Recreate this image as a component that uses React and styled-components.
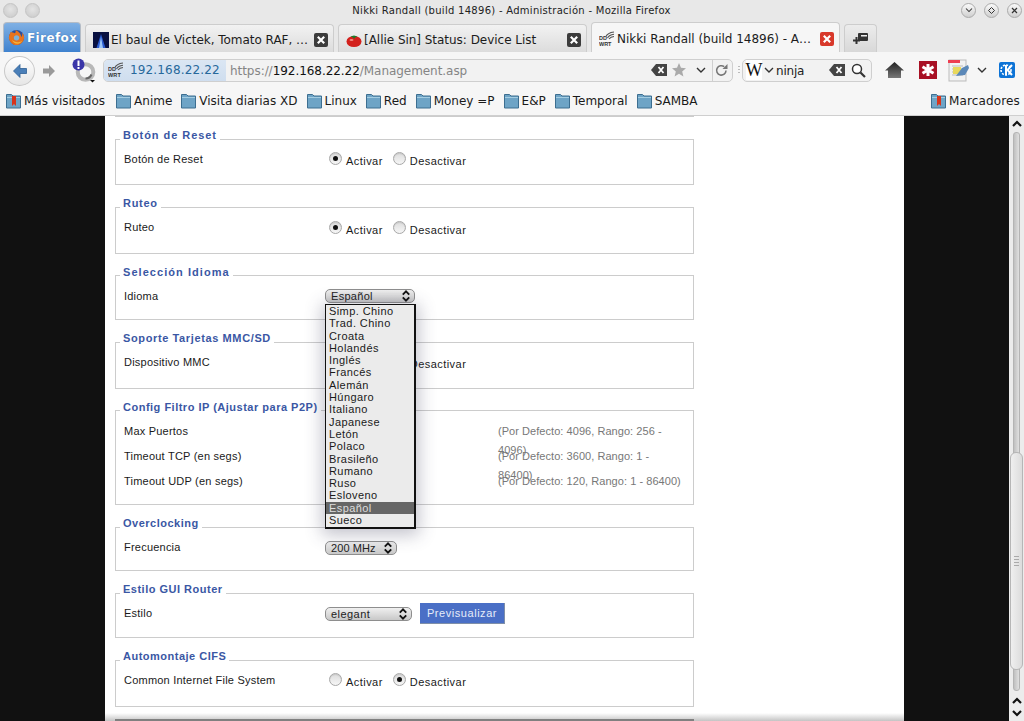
import React from "react";
import styled, { createGlobalStyle } from "styled-components";

const Global = createGlobalStyle`
  html, body { margin: 0; padding: 0; height: 100%; overflow: hidden; background: #111; }
  #root { height: 100%; }
  * { box-sizing: border-box; }
`;

const Win = styled.div`
  width: 1024px; height: 721px; display: flex; flex-direction: column; overflow: hidden;
  font-family: "DejaVu Sans", sans-serif; font-size: 12px; color: #222;
`;

/* ---- title bar ---- */
const TitleBar = styled.div`
  height: 20px; flex: none; background: #e8e8e8; display: flex; align-items: center;
  padding: 0 2px 0 3px;
`;
const TitleGroup = styled.div`display: flex; gap: ${p => p.$gap}px; width: 72px; justify-content: ${p => p.$end ? "flex-end" : "flex-start"};`;
const TitleText = styled.div`flex: 1; text-align: center; font-size: 10px; letter-spacing: .28px; color: #222; padding-right: 2px; white-space: nowrap;`;
const WinBtn = styled.div`
  width: 15px; height: 15px; border-radius: 50%; border: 1px solid ${p => p.$off ? "#c4c4c4" : "#aaa"};
  background: ${p => p.$off ? "radial-gradient(circle at 50% 40%, #e4e4e4, #c8c8c8)" : "linear-gradient(#fafafa, #cfcfcf)"};
  display: flex; align-items: center; justify-content: center; color: #333;
`;

/* ---- tabs ---- */
const TabBar = styled.div`
  height: 32px; flex: none; background: #e8e8e8; display: flex; align-items: flex-end; padding-left: 3px; gap: 4px;
`;
const FirefoxBtn = styled.div`
  width: 78px; height: 30px; border: 1px solid #b4bcc6; border-bottom: 0; border-radius: 4px 4px 0 0;
  background: linear-gradient(#7fb0e4, #3f82cf); display: flex; align-items: center; gap: 2px; padding-left: 4px;
  color: #fff; font-weight: bold; font-size: 12px; letter-spacing: .4px;
  text-shadow: 0 0 1px #2b5f9f;
`;
const Tab = styled.div`
  width: 249px; height: ${p => p.$active ? 30 : 28}px; border: 1px solid #cdcdcd; border-bottom: 0;
  border-radius: 4px 4px 0 0; display: flex; align-items: center; padding: 3px 5px 0 7px;
  background: ${p => p.$active ? "#f6f6f6" : "linear-gradient(#f2f2f2, #dcdcdc)"};
  color: #1c1c1c; font-size: 12px; letter-spacing: -.03px;
`;
const TabIcon = styled.span`width: 18px; height: 16px; flex: none; display: flex;`;
const TabLabel = styled.span`flex: 1; white-space: nowrap; overflow: hidden;`;
const NewTab = styled(Tab)`width: 33px; justify-content: center; padding: 0; background: linear-gradient(#ececec, #d8d8d8);`;
const Close = styled.span`
  width: 14px; height: 14px; flex: none; border-radius: 2px; background: ${p => p.$red ? "#d8392b" : "#3c3c3c"};
  display: flex; align-items: center; justify-content: center;
`;

/* ---- nav ---- */
const NavBar = styled.div`
  height: 36px; flex: none; background: #f6f6f6; display: flex; align-items: center; padding-left: 4px;
`;
const BackBtn = styled.div`
  width: 31px; height: 30px; flex: none; border-radius: 50%; border: 1px solid #c8c8c8; margin-top: 2px;
  background: linear-gradient(#fff, #e6e6e6); display: flex; align-items: center; justify-content: center;
`;
const FwdIcon = styled.span`width: 14px; height: 14px; margin: 2px 0 0 7px; display: flex; flex: none;`;
const AlertIcon = styled.span`width: 24px; height: 25px; margin: 0 0 0 16px; flex: none; display: flex;`;
const UrlBar = styled.div`
  width: 630px; height: 23px; margin-left: 7px; flex: none; border: 1px solid #cfcfcf; border-radius: 5px;
  background: #f2f2f2; display: flex; align-items: center; overflow: hidden;
`;
const Identity = styled.div`
  width: 122px; height: 100%; flex: none; background: linear-gradient(#dbe6f3, #cfdeef); display: flex; align-items: center;
  padding-left: 4px; gap: 6px; color: #27689b; font-size: 12px; letter-spacing: .15px;
`;
const UrlText = styled.div`flex: 1; padding-left: 4px; color: #858585; font-size: 12px; letter-spacing: -.05px; white-space: nowrap; margin-top: 1px;`;
const Host = styled.span`color: #111;`;
const UrlTools = styled.div`display: flex; align-items: center; height: 100%; padding-right: 4px;`;
const Divider = styled.span`width: 1px; height: 100%; background: #cfcfcf; margin: 0 2px 0 6px;`;
const ToolSlot = styled.span`display: flex; align-items: center; margin-left: ${p => p.$ml || 0}px;`;
const SearchGrip = styled.span`
  width: 2px; height: 9px; margin: 0 2px 0 5px; flex: none;
  background: repeating-linear-gradient(#bbb 0 1px, transparent 1px 3px);
`;
const SearchBar = styled.div`
  width: 130px; height: 23px; flex: none; border: 1px solid #cfcfcf; border-radius: 5px;
  background: #f2f2f2; display: flex; align-items: center; padding: 0 5px 0 3px;
`;
const WikiW = styled.span`
  width: 16px; height: 20px; background: #fff; font-family: "Liberation Serif", serif; font-size: 18px;
  display: flex; align-items: center; justify-content: center; color: #111;
`;
const SearchText = styled.span`flex: 1; font-size: 12px; margin-left: 2px; margin-top: 1px; letter-spacing: -.2px;`;
const NavIcons = styled.div`display: flex; align-items: center; margin-left: 13px; flex: none;`;
const NavIcon = styled.span`display: flex; margin-left: ${p => p.$ml || 0}px;`;

/* ---- bookmarks ---- */
const BookmarkBar = styled.div`
  height: 28px; flex: none; background: #f6f6f6; border-bottom: 1px solid #cfcfcf; display: flex; align-items: center;
  padding: 0 4px 1px 6px; gap: 9px;
`;
const Bookmark = styled.div`
  display: flex; align-items: center; gap: 3px; font-size: 12px; color: #1a1a1a; white-space: nowrap;
  margin-left: ${p => p.$auto ? "auto" : "0"}; margin-right: ${p => p.$mr || 0}px; letter-spacing: ${p => p.$ls || 0}px;
`;

/* ---- viewport ---- */
const Viewport = styled.div`flex: 1; display: flex; min-height: 0;`;
const PageBg = styled.div`flex: 1; background: #111; padding-left: 105px; overflow: hidden;`;
const Content = styled.div`
  position: relative; width: 799px; height: 605px; background: #fff; padding-left: 10px;
  font-family: "Liberation Sans", Arial, sans-serif; font-size: 11px; letter-spacing: .22px; color: #1a1a1a;
`;
const TopRule = styled.div`width: 579px; height: 1px; background: #ccc;`;
const Field = styled.fieldset`
  width: 579px; height: ${p => p.$h + 6}px; margin: ${p => p.$mt}px 0 0; padding: 0 0 0 8px; min-width: 0;
  border: 1px solid #ccc; display: block;
`;
const Legend = styled.legend`
  margin-left: -4px; padding: 0 3px; font-weight: bold; color: #3a57a4; font-size: 11px; line-height: 13px;
  letter-spacing: ${p => p.$ls ?? .5}px; transform: translateY(${p => p.$dy ?? -4}px);
`;
const Rows = styled.div`padding-top: ${p => p.$pt ?? 1}px;`;
const Row = styled.div`display: grid; grid-template-columns: 201px 173px 186px; height: 25px; align-items: start;`;
const Label = styled.div`line-height: 25px;`;
const Controls = styled.div`display: flex; align-items: flex-start; padding: ${p => p.$pt ?? 5}px 0 0 4px; white-space: nowrap; grid-column: 2 / 4;`;
const Radio = styled.span`
  width: 13px; height: 13px; border-radius: 50%; border: 1px solid #a8a8a8; flex: none;
  background: linear-gradient(#dcdcdc, #f6f6f6); display: flex; align-items: center; justify-content: center;
  box-shadow: inset 0 1px 1px rgba(0,0,0,.1);
  margin: ${p => p.$first ? 0 : "0 0 0 10px"};
  &::after { content: ""; width: 5px; height: 5px; border-radius: 50%; background: ${p => p.$on ? "#111" : "transparent"}; }
`;
const RadioText = styled.span`margin: 3px 0 0 4px; line-height: 13px; letter-spacing: .45px;`;
const Hint = styled.div`grid-column: 3; color: #777; line-height: 19px; padding-top: 3px; letter-spacing: .05px;`;
const SelectBox = styled.div`
  width: ${p => p.$w}px; height: 14px; margin: ${p => p.$mt ?? 6}px 0 0; border: 1px solid #8e8e8e; border-radius: 5px; flex: none;
  background: linear-gradient(#f0f0f0, #c8c8c8); display: flex; align-items: center; justify-content: space-between;
  padding: 0 3px 0 5px; color: #222; line-height: 12px; letter-spacing: ${p => p.$ls ?? .3}px;
`;
const SelectRow = styled.div`display: flex; align-items: flex-start; grid-column: 2 / 4;`;
const Btn = styled.div`
  width: 85px; height: 21px; margin: 2px 0 0 8px; background: #4a6fc6; border-right: 1px solid #7f8fa8; border-bottom: 1px solid #7f8fa8; color: #e6ecf9;
  display: flex; align-items: center; justify-content: center; letter-spacing: .55px; padding-bottom: 1px;
`;
const Popup = styled.div`
  position: absolute; left: 220px; top: 188px; width: 91px; height: 225px; background: #ebebeb; border: 1px solid #111; border-width: 1px 2px 2px 1px;
  box-shadow: 0 3px 16px 3px rgba(60,60,90,.3); z-index: 5; color: #1a1a1a;
`;
const Option = styled.div`
  height: 12.3px; line-height: 12.3px; padding-left: 3px; white-space: nowrap; letter-spacing: .42px;
  background: ${p => p.$sel ? "#666" : "transparent"}; color: ${p => p.$sel ? "#ddd" : "inherit"};
`;
const Footer = styled.div`
  position: absolute; left: 0; right: 0; bottom: 0; height: 8px; background: linear-gradient(#fff, #c4c4c4);
`;
const FooterRule = styled.div`position: absolute; left: 10px; right: 210px; bottom: 0; height: 2px; background: #808080;`;

/* ---- scrollbar ---- */
const Scrollbar = styled.div`
  width: 15px; flex: none; background: #ececec; display: flex; flex-direction: column; align-items: center; padding: 1px 0;
`;
const Arrow = styled.span`width: 10px; height: 13px; display: flex; align-items: center; flex: none;`;
const Groove = styled.div`
  position: relative; flex: 1; width: 15px; margin: 2px 0 5px; display: flex; justify-content: center;
  &::before { content: ""; width: 5px; height: 100%; border: 1px solid #b4b4b4; border-radius: 3px; background: linear-gradient(90deg, #c0c0c0, #e0e0e0); }
`;
const Thumb = styled.div`
  position: absolute; left: 1px; right: 1px; top: 320px; height: 218px; border: 1px solid #b6b6b6; border-radius: 6px;
  background: linear-gradient(90deg, #efefef, #dcdcdc); display: flex; flex-direction: column; align-items: center; justify-content: center; gap: 2px;
`;
const Grip = styled.span`width: 5px; height: 1px; background: #aaa;`;

/* ---- icons ---- */
const Chev = ({ c = "#333", s = 8 }) => (
  <svg width={s + 2} height={s} viewBox="0 0 10 8"><path d="M1 2l4 4 4-4" fill="none" stroke={c} strokeWidth="1.4" /></svg>
);
const FirefoxLogo = () => (
  <svg width="17" height="17" viewBox="0 0 18 18">
    <circle cx="9" cy="9" r="8" fill="#2b4f9a" />
    <circle cx="9.5" cy="9" r="4" fill="#7db1d8" />
    <path d="M3 3c-1 2-2 4-2 6 0 4 3.500 8 8 8s8-3.600 8-8c0-2-.8-3.800-2-5 .4 2-.2 3.500-1 4.500C14 6 12 3 8 1c.6 2-.3 3-1 3.600C6 3.800 4 3.800 3 3zm6 3.500c1.600 0 3 1.200 3 2.800s-1.400 2.900-3 2.900-3-1.100-3-2.700 1.400-3 3-3z" fill="#e8731c" />
    <path d="M4 11c1 3 3.500 4.500 6 4.500s4-1.200 5-3c-1 1-3 1.700-5 1.500S5.500 13 4 11z" fill="#f6b63a" />
  </svg>
);
const VictekIcon = () => (
  <svg width="16" height="16" viewBox="0 0 16 16">
    <rect width="16" height="16" fill="#081040" />
    <path d="M8 2L3.500 16h9z" fill="#2a5bd0" />
    <path d="M8 5L6 16h4z" fill="#9cc4f6" />
  </svg>
);
const TomatoIcon = () => (
  <svg width="16" height="16" viewBox="0 0 16 16">
    <ellipse cx="8" cy="9.500" rx="7.500" ry="5.500" fill="#d3201c" />
    <ellipse cx="5.500" cy="8" rx="2" ry="1" fill="#f08a80" />
    <path d="M4.500 4.500L8 3.500l3.500 1L9 5.500 8 7 7 5.500z" fill="#1d7a2a" />
  </svg>
);
const DdWrt = () => (
  <svg width="16" height="16" viewBox="0 0 16 16">
    <text x="0" y="9" fontFamily="Liberation Sans, sans-serif" fontSize="5.500" fontWeight="bold" fill="#333">DD</text>
    <text x="0" y="15" fontFamily="Liberation Sans, sans-serif" fontSize="5.500" fontWeight="bold" fill="#333">WRT</text>
    <path d="M7 5.500C8 3 11 1.500 15 1M8.500 7c1-2 3.500-3.300 6.500-3.700M10 8c1-1.300 3-2.300 5-2.500" fill="none" stroke="#555" strokeWidth="1.100" />
  </svg>
);
const CloseX = () => (
  <svg width="10" height="10" viewBox="0 0 10 10"><path d="M1.800 1.800l6.400 6.400M8.200 1.800L1.800 8.200" stroke="#fff" strokeWidth="2.200" /></svg>
);
const NewTabIcon = () => (
  <svg width="15" height="12" viewBox="0 0 15 12">
    <rect x="5" y="0" width="10" height="8" rx="1" fill="#333" />
    <rect x="8" y="2" width="6" height="1.500" fill="#eee" />
    <path d="M3.500 4v7M0 7.500h7" stroke="#333" strokeWidth="2" />
  </svg>
);
const BackArrow = () => (
  <svg width="16" height="16" viewBox="0 0 16 16"><path d="M8 1.500L1.500 8 8 14.500V10.500h6.500v-5H8z" fill="#4a7fb8" stroke="#2d5f95" strokeWidth=".8" /></svg>
);
const FwdArrow = () => (
  <svg width="14" height="14" viewBox="0 0 14 14"><path d="M7 1l6 6-6 6V9.500H1v-5h6z" fill="#9a9a9a" /></svg>
);
const AlertRing = () => (
  <svg width="24" height="25" viewBox="0 0 24 25">
    <circle cx="13.500" cy="14" r="7.800" fill="none" stroke="#b8b8b8" strokeWidth="4" />
    <path d="M13.500 20.500a6.500 6.500 0 0 0 6-4" fill="none" stroke="#666" strokeWidth="2" />
    <circle cx="6.500" cy="6.500" r="6" fill="#3a35a8" />
    <rect x="5.500" y="2.500" width="2" height="5.500" fill="#fff" />
    <rect x="5.500" y="9" width="2" height="2" fill="#fff" />
    <path d="M18 22h5l-2.500 2.500z" fill="#111" />
  </svg>
);
const ClearIcon = () => (
  <svg width="16" height="12" viewBox="0 0 16 12">
    <path d="M5 0h11v12H5L0 6z" fill="#444" />
    <path d="M7.500 3l5 6M12.500 3l-5 6" stroke="#fff" strokeWidth="1.800" />
  </svg>
);
const Star = () => (
  <svg width="14" height="14" viewBox="0 0 14 14"><path d="M7 0l2 4.800 5 .4-3.800 3.300 1.200 5L7 10.800l-4.400 2.700 1.200-5L0 5.200l5-.4z" fill="#aaa" /></svg>
);
const Reload = () => (
  <svg width="13" height="14" viewBox="0 0 13 14">
    <path d="M11 7.500a4.700 4.700 0 1 1-1.800-3.800" fill="none" stroke="#777" strokeWidth="1.600" />
    <path d="M12.500 1v5h-5z" fill="#777" />
  </svg>
);
const Magnifier = () => (
  <svg width="15" height="15" viewBox="0 0 15 15">
    <circle cx="6" cy="6" r="4.500" fill="#fff" stroke="#333" strokeWidth="1.500" />
    <path d="M9.500 9.500L14 14" stroke="#333" strokeWidth="2.200" />
  </svg>
);
const Home = () => (
  <svg width="19" height="16" viewBox="0 0 19 16">
    <defs><linearGradient id="hg" x1="0" y1="0" x2="0" y2="1"><stop offset="0" stopColor="#222" /><stop offset="1" stopColor="#777" /></linearGradient></defs>
    <path d="M9.500 0L19 8.500h-3V16H3V8.500H0z" fill="url(#hg)" />
  </svg>
);
const RedIcon = () => (
  <svg width="18" height="18" viewBox="0 0 18 18">
    <rect width="18" height="18" fill="#a81024" />
    <path d="M9 3v12M3.500 5.800l11 6.400M14.500 5.800l-11 6.400" stroke="#fff" strokeWidth="3" />
  </svg>
);
const NoteIcon = () => (
  <svg width="22" height="23" viewBox="0 0 22 23">
    <rect x="1" y="1" width="17" height="21" fill="#f2f2f2" stroke="#bbb" />
    <rect x="0" y="1" width="12" height="3" fill="#ee3d50" />
    <path d="M4 7h11M4 10h11M4 13h11M4 16h11" stroke="#bbb" />
    <rect x="5" y="8" width="8" height="7" fill="#e8d85c" />
    <path d="M8 17l6-8 6-3 1 3-4 7z" fill="#5b88b8" />
  </svg>
);
const KdeIcon = () => (
  <svg width="16" height="16" viewBox="0 0 16 16">
    <rect width="16" height="16" rx="2" fill="#0d73d6" />
    <circle cx="7" cy="8" r="5" fill="none" stroke="#fff" strokeWidth="1.600" strokeDasharray="2 1.300" />
    <path d="M7 3v10M13 3L8.500 8l4.500 5" fill="none" stroke="#fff" strokeWidth="2" />
  </svg>
);
const Folder = ({ mark }) => (
  <svg width="15" height="16" viewBox="0 0 15 16">
    <path d="M.5 3V1.500h5l1.500 1.500h7.500v12H.5z" fill="#6ea4c6" stroke="#3c6e90" />
    <rect x="1" y="4" width="13" height="1" fill="#a4cde2" />
    {mark && <path d="M6 3h4v10l-2-2-2 2z" fill="#d8341c" />}
  </svg>
);
const Spin = () => (
  <svg width="10" height="12" viewBox="0 0 10 13">
    <path d="M1.500 5L5 1.500 8.500 5M1.500 8L5 11.500 8.500 8" fill="none" stroke="#111" strokeWidth="2" />
  </svg>
);
const ArrowUp = () => (
  <svg width="10" height="7" viewBox="0 0 10 7"><path d="M1 6l4-4 4 4" fill="none" stroke="#111" strokeWidth="2.200" /></svg>
);
const ArrowDown = () => (
  <svg width="10" height="7" viewBox="0 0 10 7"><path d="M1 1l4 4 4-4" fill="none" stroke="#111" strokeWidth="2.200" /></svg>
);

const RadioPair = ({ on, pt }) => (
  <Controls $pt={pt}>
    <Radio $first $on={on} /><RadioText>Activar</RadioText>
    <Radio $on={!on} /><RadioText>Desactivar</RadioText>
  </Controls>
);

const languages = ["Simp. Chino", "Trad. Chino", "Croata", "Holandés", "Inglés", "Francés", "Alemán", "Húngaro", "Italiano", "Japanese", "Letón", "Polaco", "Brasileño", "Rumano", "Ruso", "Esloveno", "Español", "Sueco"];
const bookmarks = ["Anime", "Visita diarias XD", "Linux", "Red", "Money =P", "E&P", "Temporal", "SAMBA"];

export default function App() {
  return (
    <Win>
      <Global />
      <TitleBar>
        <TitleGroup $gap={7}>
          <WinBtn $off />
          <WinBtn $off />
        </TitleGroup>
        <TitleText>Nikki Randall (build 14896) - Administración - Mozilla Firefox</TitleText>
        <TitleGroup $gap={8} $end>
          <WinBtn><Chev s={6} /></WinBtn>
          <WinBtn><svg width="7" height="7" viewBox="0 0 7 7"><path d="M3.500.5l3 3-3 3-3-3z" fill="none" stroke="#333" /></svg></WinBtn>
          <WinBtn><svg width="7" height="7" viewBox="0 0 7 7"><path d="M1 1l5 5M6 1L1 6" stroke="#333" strokeWidth="1.200" /></svg></WinBtn>
        </TitleGroup>
      </TitleBar>
      <TabBar>
        <FirefoxBtn><FirefoxLogo />Firefox</FirefoxBtn>
        <Tab>
          <TabIcon><VictekIcon /></TabIcon>
          <TabLabel>El baul de Victek, Tomato RAF, …</TabLabel>
          <Close><CloseX /></Close>
        </Tab>
        <Tab>
          <TabIcon><TomatoIcon /></TabIcon>
          <TabLabel>[Allie Sin] Status: Device List</TabLabel>
          <Close><CloseX /></Close>
        </Tab>
        <Tab $active>
          <TabIcon><DdWrt /></TabIcon>
          <TabLabel>Nikki Randall (build 14896) - A…</TabLabel>
          <Close $red><CloseX /></Close>
        </Tab>
        <NewTab><NewTabIcon /></NewTab>
      </TabBar>
      <NavBar>
        <BackBtn><BackArrow /></BackBtn>
        <FwdIcon><FwdArrow /></FwdIcon>
        <AlertIcon><AlertRing /></AlertIcon>
        <UrlBar>
          <Identity><DdWrt />192.168.22.22</Identity>
          <UrlText>https://<Host>192.168.22.22</Host>/Management.asp</UrlText>
          <UrlTools>
            <ClearIcon />
            <ToolSlot $ml={5}><Star /></ToolSlot>
            <ToolSlot $ml={10}><Chev c="#333" /></ToolSlot>
            <Divider />
            <Reload />
          </UrlTools>
        </UrlBar>
        <SearchGrip />
        <SearchBar>
          <WikiW>W</WikiW>
          <ToolSlot $ml={2}><Chev /></ToolSlot>
          <SearchText>ninja</SearchText>
          <ClearIcon />
          <ToolSlot $ml={6}><Magnifier /></ToolSlot>
        </SearchBar>
        <NavIcons>
          <Home />
          <NavIcon $ml={15}><RedIcon /></NavIcon>
          <NavIcon $ml={11}><NoteIcon /></NavIcon>
          <NavIcon $ml={7}><Chev /></NavIcon>
          <NavIcon $ml={12}><KdeIcon /></NavIcon>
        </NavIcons>
      </NavBar>
      <BookmarkBar>
        <Bookmark $mr={2}><Folder mark />Más visitados</Bookmark>
        {bookmarks.map(b => <Bookmark key={b}><Folder />{b}</Bookmark>)}
        <Bookmark $auto $ls={.15}><Folder mark />Marcadores</Bookmark>
      </BookmarkBar>
      <Viewport>
        <PageBg>
          <Content>
            <TopRule />
            <Field $h={46} $mt={16}>
              <Legend $ls={.95}>Botón de Reset</Legend>
              <Rows><Row><Label>Botón de Reset</Label><RadioPair on /></Row></Rows>
            </Field>
            <Field $h={47} $mt={16}>
              <Legend $ls={.7}>Ruteo</Legend>
              <Rows><Row><Label>Ruteo</Label><RadioPair on pt={6} /></Row></Rows>
            </Field>
            <Field $h={45} $mt={15}>
              <Legend $ls={1.05} $dy={-3}>Selección Idioma</Legend>
              <Rows $pt={2}><Row><Label>Idioma</Label><SelectRow><SelectBox $w={90} $mt={5}>Español<Spin /></SelectBox></SelectRow></Row></Rows>
            </Field>
            <Field $h={47} $mt={16}>
              <Legend $ls={.62}>Soporte Tarjetas MMC/SD</Legend>
              <Rows><Row><Label>Dispositivo MMC</Label><RadioPair on /></Row></Rows>
            </Field>
            <Field $h={95} $mt={15}>
              <Legend $dy={-3}>Config Filtro IP (Ajustar para P2P)</Legend>
              <Rows $pt={2}>
                <Row><Label>Max Puertos</Label><Hint>(Por Defecto: 4096, Rango: 256 - 4096)</Hint></Row>
                <Row><Label>Timeout TCP (en segs)</Label><Hint>(Por Defecto: 3600, Rango: 1 - 86400)</Hint></Row>
                <Row><Label>Timeout UDP (en segs)</Label><Hint>(Por Defecto: 120, Rango: 1 - 86400)</Hint></Row>
              </Rows>
            </Field>
            <Field $h={44} $mt={16}>
              <Legend>Overclocking</Legend>
              <Rows><Row><Label>Frecuencia</Label><SelectRow><SelectBox $w={72} $ls={.1}>200 MHz<Spin /></SelectBox></SelectRow></Row></Rows>
            </Field>
            <Field $h={45} $mt={16}>
              <Legend>Estilo GUI Router</Legend>
              <Rows><Row><Label>Estilo</Label><SelectRow><SelectBox $w={87} $mt={6} $ls={.45}>elegant<Spin /></SelectBox><Btn>Previsualizar</Btn></SelectRow></Row></Rows>
            </Field>
            <Field $h={47} $mt={16}>
              <Legend>Automontaje CIFS</Legend>
              <Rows><Row><Label>Common Internet File System</Label><RadioPair on={false} /></Row></Rows>
            </Field>
            <Popup>
              {languages.map(l => <Option key={l} $sel={l === "Español"}>{l}</Option>)}
            </Popup>
            <Footer><FooterRule /></Footer>
          </Content>
        </PageBg>
        <Scrollbar>
          <Arrow><ArrowUp /></Arrow>
          <Groove><Thumb><Grip /><Grip /><Grip /><Grip /></Thumb></Groove>
          <Arrow><ArrowUp /></Arrow>
          <Arrow><ArrowDown /></Arrow>
        </Scrollbar>
      </Viewport>
    </Win>
  );
}
